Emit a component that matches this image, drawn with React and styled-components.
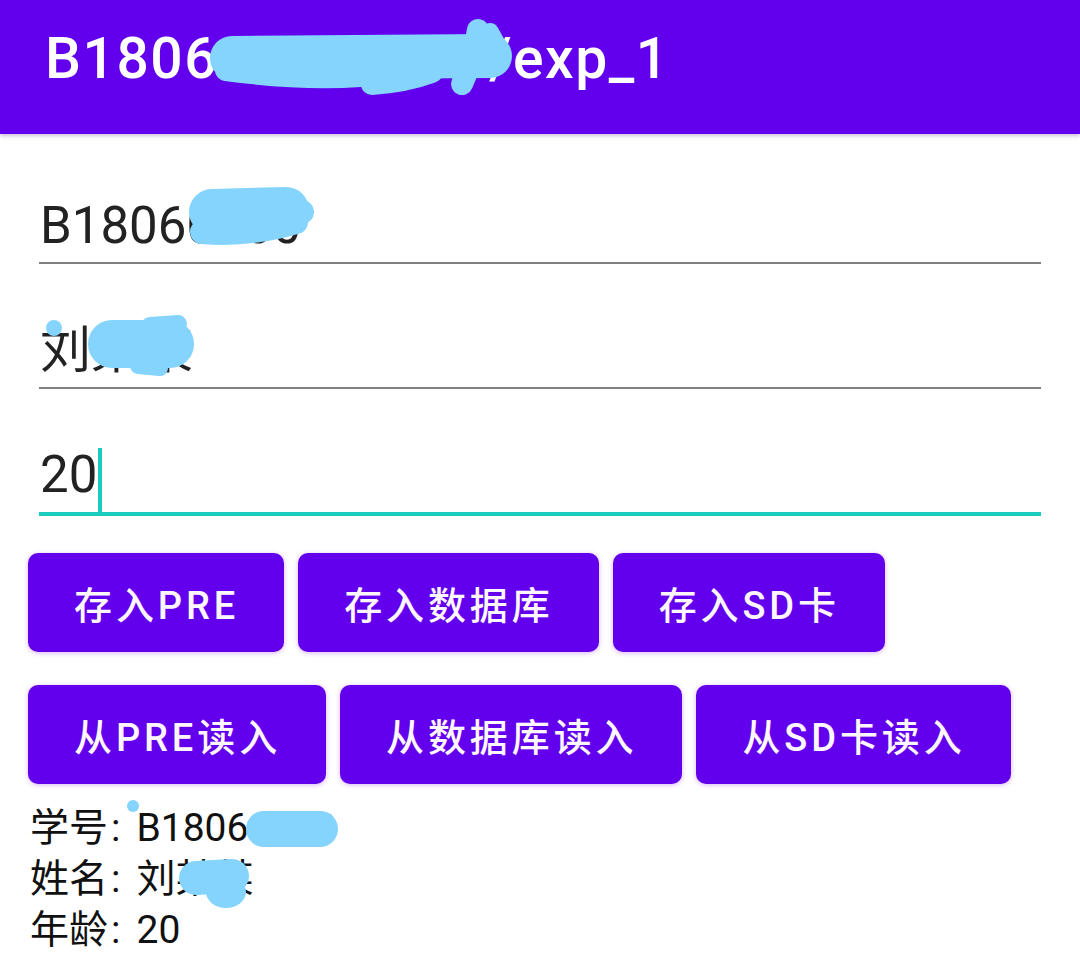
import React from "react";
import styled, { createGlobalStyle } from "styled-components";

const GlobalStyle = createGlobalStyle`
  html, body { margin: 0; padding: 0; background: #ffffff; }
  body { font-family: "Roboto", "Noto Sans CJK SC", sans-serif; }
  * { box-sizing: border-box; }
`;

const Page = styled.div`
  position: relative;
  width: 1080px;
  height: 980px;
  overflow: hidden;
  background: #ffffff;
`;

const AppBar = styled.header`
  height: 134px;
  background: #6200ee;
  display: flex;
  align-items: center;
  padding-left: 45px;
  box-shadow: 0 2px 4px rgba(60, 0, 120, 0.25);
  position: relative;
  z-index: 1;
`;

const Title = styled.h1`
  margin: 0;
  margin-top: -17px;
  color: #ffffff;
  font-family: "Roboto", "Noto Sans CJK SC", sans-serif;
  font-weight: 500;
  font-size: 57px;
  letter-spacing: 1.5px;
  white-space: nowrap;
`;

const Form = styled.div`
  padding: 5px 39px 0 39px;
  display: flex;
  flex-direction: column;
`;

const Field = styled.div`
  height: ${(p) => (p.$focused ? 127 : 125)}px;
  display: flex;
  align-items: flex-end;
  border-bottom: ${(p) => (p.$focused ? "4px solid #1bcbbb" : "2px solid #808080")};
  padding-bottom: ${(p) => (p.$focused ? 12 : 11)}px;
  padding-left: 1px;
`;

const FieldText = styled.span`
  font-family: "Roboto", "Noto Sans CJK SC", sans-serif;
  font-size: 51px;
  line-height: 51px;
  color: #222222;
  white-space: nowrap;
  display: inline-flex;
  align-items: flex-end;
`;

const Cursor = styled.span`
  display: inline-block;
  width: 4px;
  height: 66px;
  background: #1bcbbb;
  margin-left: 1px;
  margin-bottom: -14px;
`;

const ButtonRow = styled.div`
  display: flex;
  gap: 14px;
  padding-left: 28px;
  margin-top: ${(p) => p.$top}px;
`;

const Button = styled.button`
  height: 99px;
  padding: 0 45px 0 46px;
  border: none;
  border-radius: 10px;
  background: #6200ee;
  color: #fff7ff;
  font-family: "Roboto", "Noto Sans CJK SC", sans-serif;
  font-weight: 500;
  font-size: 38px;
  letter-spacing: 3.9px;
  white-space: nowrap;
  box-shadow: 0 1px 5px rgba(140, 40, 220, 0.35);
`;

const Info = styled.div`
  margin-top: 19px;
  padding-left: 30px;
  display: flex;
  flex-direction: column;
`;

const InfoLine = styled.div`
  font-family: "Roboto", "Noto Sans CJK SC", sans-serif;
  font-size: 39px;
  line-height: 51px;
  color: #111111;
  white-space: nowrap;
`;

const Colon = styled.span`
  font-family: "Roboto", sans-serif;
  margin: 0 16px 0 3px;
`;

const Overlay = styled.svg`
  position: absolute;
  top: 0;
  left: 0;
  pointer-events: none;
  z-index: 2;
`;

const ink = "#84d4fe";

function Scribbles() {
  return (
    <Overlay width="1080" height="980" viewBox="0 0 1080 980">
      <g stroke={ink} fill="none" strokeLinecap="round" strokeLinejoin="round">
        {/* title */}
        <path d="M232 58 L490 56" strokeWidth="44" />
        <path d="M226 70 Q300 80 360 76" strokeWidth="22" />
        <path d="M372 84 Q405 82 432 72" strokeWidth="22" />
        <path d="M478 30 L472 60 L462 84" strokeWidth="22" />
        <path d="M490 32 L500 50" strokeWidth="18" />
        {/* field 1 */}
        <path d="M212 212 L286 210" strokeWidth="46" />
        <path d="M202 232 Q250 236 296 222" strokeWidth="24" />
        <path d="M296 208 L302 212" strokeWidth="24" />
        {/* field 2 */}
        <circle cx="54" cy="328" r="8" fill={ink} strokeWidth="0" />
        <path d="M112 344 L170 344" strokeWidth="48" />
        <path d="M150 326 L178 324" strokeWidth="18" />
        <path d="M138 366 L160 368" strokeWidth="16" />
        {/* info 1 */}
        <circle cx="133" cy="806" r="6" fill={ink} strokeWidth="0" />
        <path d="M264 829 L320 829" strokeWidth="36" />
        {/* info 2 */}
        <path d="M196 878 L232 876" strokeWidth="34" />
        <ellipse cx="226" cy="892" rx="20" ry="16" fill={ink} strokeWidth="0" />
      </g>
    </Overlay>
  );
}

export default function App() {
  return (
    <Page>
      <GlobalStyle />
      <AppBar>
        <Title>B180600000000/exp_1</Title>
      </AppBar>
      <Form>
        <Field>
          <FieldText>B18060000</FieldText>
        </Field>
        <Field>
          <FieldText>刘某某</FieldText>
        </Field>
        <Field $focused>
          <FieldText>
            20
            <Cursor />
          </FieldText>
        </Field>
      </Form>
      <ButtonRow $top={37}>
        <Button>存入PRE</Button>
        <Button>存入数据库</Button>
        <Button>存入SD卡</Button>
      </ButtonRow>
      <ButtonRow $top={33}>
        <Button>从PRE读入</Button>
        <Button>从数据库读入</Button>
        <Button>从SD卡读入</Button>
      </ButtonRow>
      <Info>
        <InfoLine>
          学号<Colon>:</Colon>B18060000
        </InfoLine>
        <InfoLine>
          姓名<Colon>:</Colon>刘某某
        </InfoLine>
        <InfoLine>
          年龄<Colon>:</Colon>20
        </InfoLine>
      </Info>
      <Scribbles />
    </Page>
  );
}
